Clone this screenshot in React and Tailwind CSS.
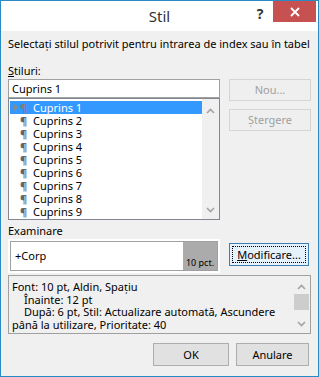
import React from "react";

const font = { fontFamily: '"Noto Sans", "Open Sans", sans-serif' };

function Btn({ children, disabled, className = "" }) {
  return (
    <div
      className={
        "flex items-center justify-center border " +
        (disabled
          ? "border-[#d5d5d5] bg-[#efefef] text-[#a0a0a0] "
          : "border-[#adadad] bg-[#e1e1e1] text-black ") +
        className
      }
    >
      {children}
    </div>
  );
}

function Chevron({ up }) {
  return (
    <svg width="9" height="6" viewBox="0 0 9 6">
      <path
        d={up ? "M1 5 L4.5 1.5 L8 5" : "M1 1 L4.5 4.5 L8 1"}
        fill="none"
        stroke="#a3a3a3"
        strokeWidth="1.6"
      />
    </svg>
  );
}

export default function App() {
  const items = [1, 2, 3, 4, 5, 6, 7, 8, 9];
  return (
    <div
      className="w-[319px] h-[377px] border border-[#2a8bc4] bg-[#f0f0f0] flex flex-col text-black overflow-hidden"
      style={font}
    >
      {/* title bar */}
      <div className="h-[30px] bg-white flex items-start shrink-0">
        <div className="w-[71px]" />
        <div className="flex-1 h-full flex items-center justify-center text-[15px] text-[#333]">
          Stil
        </div>
        <div className="flex items-start">
          <div className="w-[26px] h-[24px] flex items-center justify-center text-[14px] font-bold text-[#333]">
            ?
          </div>
          <div className="w-[43px] h-[21px] bg-[#c75050] flex items-center justify-center mr-[2px]">
            <svg width="10" height="10" viewBox="0 0 10 10">
              <path d="M1 1 L9 9 M9 1 L1 9" stroke="white" strokeWidth="1.8" />
            </svg>
          </div>
        </div>
      </div>

      {/* body */}
      <div className="flex flex-col pl-[7px] pt-[5px] text-[11px] leading-[16px]">
        <div className="whitespace-nowrap">Selectați stilul potrivit pentru intrarea de index sau în tabel</div>

        <div className="flex mt-[11px]">
          <div className="w-[212px] flex flex-col">
            <div className="h-[16px]">
              <span className="underline">S</span>tiluri:
            </div>
            <div className="h-[19px] border border-[#a0a0a0] bg-white flex items-center pl-[3px]">
              Cuprins 1
            </div>
            <div className="h-[122px] border border-[#828790] bg-white flex">
              <div className="flex-1 pl-[1px] pt-[2px] flex flex-col">
                {items.map((n) => {
                  const sel = n === 1;
                  return (
                    <div
                      key={n}
                      className={
                        "h-[13px] flex items-center leading-[13px] " +
                        (sel ? "bg-[#3399ff] text-white" : "")
                      }
                    >
                      <div className="w-[9px] shrink-0 flex justify-end pr-[1px]">
                        {sel && (
                          <svg width="4" height="7" viewBox="0 0 4 7">
                            <path d="M0 0 L4 3.5 L0 7Z" fill="#8a8a8a" />
                          </svg>
                        )}
                      </div>
                      <div
                        className={
                          "w-[13px] shrink-0 pl-[1px] text-[11px] font-bold " +
                          (sel ? "text-[#7f7f7f]" : "text-[#666]")
                        }
                      >
                        ¶
                      </div>
                      <div className="pl-[1px]">Cuprins {n}</div>
                    </div>
                  );
                })}
              </div>
              <div className="w-[17px] bg-[#f0f0f0] flex flex-col items-center justify-between pt-[9px] pb-[6px]">
                <Chevron up />
                <Chevron />
              </div>
            </div>
          </div>
          <div className="ml-[9px] w-[82px] flex flex-col pt-[16px]">
            <Btn disabled className="h-[22px]">Nou...</Btn>
            <Btn disabled className="h-[22px] mt-[8px]">Ștergere</Btn>
          </div>
        </div>

        <div className="mt-[3px] h-[16px]">Examinare</div>
        <div className="flex items-start">
          <div className="w-[212px] h-[34px] bg-white p-[2px]">
            <div className="h-full border border-[#a0a0a0] flex">
              <div className="flex-1 flex items-center pl-[4px] text-[11px]">+Corp</div>
              <div className="w-[34px] bg-[#ababab] flex items-end justify-center pb-[1px] text-[9px] leading-[12px]">
                10 pct.
              </div>
            </div>
          </div>
          <div className="ml-[9px] mt-[4px] w-[80px] h-[23px] border border-[#3c7fb1] bg-[#e5f1fb] p-[2px]">
            <div className="h-full border border-dotted border-black flex items-center justify-center">
              <span className="underline">M</span>odificare...
            </div>
          </div>
        </div>

        <div className="mt-[2px] w-[303px] h-[59px] border border-[#a0a0a0] bg-[#f0f0f0] flex">
          <div className="flex-1 pl-[3px] pt-[5px] leading-[12.7px] whitespace-nowrap">
            <div>Font: 10 pt, Aldin, Spațiu</div>
            <div className="pl-[12px]">Înainte: 12 pt</div>
            <div className="pl-[12px]">După: 6 pt, Stil: Actualizare automată, Ascundere</div>
            <div>până la utilizare, Prioritate: 40</div>
          </div>
          <div className="w-[16px] flex flex-col items-center pt-[8px] pb-[6px] mr-[1px]">
            <Chevron up />
            <div className="w-[15px] h-[16px] bg-[#cdcdcd] mt-[4px]" />
            <div className="flex-1" />
            <Chevron />
          </div>
        </div>

        <div className="flex justify-end mt-[9px] pr-[9px] gap-[7px]">
          <Btn className="w-[76px] h-[23px]">OK</Btn>
          <Btn className="w-[73px] h-[23px]">Anulare</Btn>
        </div>
      </div>
    </div>
  );
}
